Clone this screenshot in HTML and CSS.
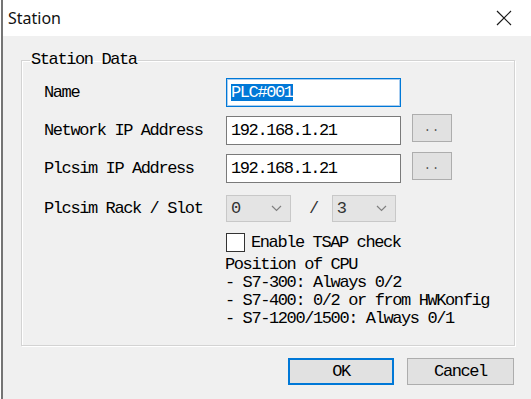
FILE: index.html
```html
<!DOCTYPE html>
<html>
<head>
<meta charset="utf-8">
<link rel="stylesheet" href="styles.css">
</head>
<body>
<div class="window">
  <div class="titlebar">
    <span class="title">Station</span>
    <svg class="close" width="16" height="16" viewBox="0 0 16 16"><path d="M1 1 L15 15 M15 1 L1 15" stroke="#1a1a1a" stroke-width="1.2" fill="none"/></svg>
  </div>
  <div class="content">
    <fieldset class="group">
      <legend>Station Data</legend>
      <div class="form">
        <div class="label">Name</div>
        <div class="field focused"><span class="sel">PLC#001</span></div>
        <div></div>

        <div class="label">Network IP Address</div>
        <div class="field">192.168.1.21</div>
        <div class="dots">..</div>

        <div class="label">Plcsim IP Address</div>
        <div class="field">192.168.1.21</div>
        <div class="dots">..</div>

        <div class="label rackrow">Plcsim Rack / Slot</div>
        <div class="rackslot rackrow">
          <div class="select"><span>0</span><svg width="11" height="7" viewBox="0 0 11 7"><path d="M1 1 L5.5 5.5 L10 1" stroke="#808080" stroke-width="1.2" fill="none"/></svg></div>
          <span class="slash">/</span>
          <div class="select"><span>3</span><svg width="11" height="7" viewBox="0 0 11 7"><path d="M1 1 L5.5 5.5 L10 1" stroke="#808080" stroke-width="1.2" fill="none"/></svg></div>
        </div>

        <div class="checkrow">
          <span class="checkbox"></span><span>Enable TSAP check</span>
        </div>

        <div class="info">Position of CPU<br>- S7-300: Always 0/2<br>- S7-400: 0/2 or from HWKonfig<br>- S7-1200/1500: Always 0/1</div>
      </div>
    </fieldset>
    <div class="buttons">
      <div class="btn default">OK</div>
      <div class="btn">Cancel</div>
    </div>
  </div>
</div>
</body>
</html>
```

FILE: styles.css
```css
html, body {
  margin: 0;
  padding: 0;
  background: #ffffff;
}

.window {
  margin-left: 1px;
  border-left: 2px solid #747474;
  height: 399px;
  box-sizing: border-box;
  background: #f0f0f0;
  font-family: "Liberation Mono", monospace;
  font-size: 17px;
  letter-spacing: -1.4px;
  color: #000;
  overflow: hidden;
}

.titlebar {
  height: 36px;
  background: #ffffff;
  display: flex;
  align-items: center;
  justify-content: space-between;
  padding: 0 19px 0 5px;
  font-family: "Noto Sans", sans-serif;
  letter-spacing: 0;
  font-size: 16px;
  color: #111;
}

.close {
  display: block;
}

.content {
  padding: 16px 16px 0 18px;
}

.group {
  margin: 0;
  padding: 10px 20px 17px 22px;
  border: 1px solid #d3d3d3;
  box-shadow: inset 1px 1px 0 #ffffff, 1px 1px 0 #ffffff;
  min-width: 0;
}

.group legend {
  margin-left: -14px;
  padding: 0 1px;
  line-height: 16px;
}

.form {
  display: grid;
  grid-template-columns: 171px 175px 40px;
  column-gap: 11px;
  row-gap: 9px;
}

.label {
  align-self: center;
  white-space: nowrap;
}

.field {
  height: 29px;
  box-sizing: border-box;
  border: 1px solid #7a7a7a;
  background: #fff;
  display: flex;
  align-items: center;
  padding-left: 4px;
  white-space: nowrap;
}

.field.focused {
  border-color: #0078d7;
  box-shadow: inset 0 0 0 1px #a8cdf0;
}

.sel {
  background: #0078d7;
  color: #fff;
  line-height: 17px;
}

.dots {
  align-self: start;
  margin-top: -2px;
  height: 28px;
  box-sizing: border-box;
  border: 1px solid #adadad;
  background: #e1e1e1;
  color: #555;
  font-size: 12px;
  letter-spacing: 1px;
  display: flex;
  align-items: center;
  justify-content: center;
}

.rackrow {
  margin-top: 3px;
}

.rackslot {
  grid-column: 2 / 4;
  display: flex;
  align-items: center;
}

.select {
  width: 65px;
  height: 27px;
  box-sizing: border-box;
  border: 1px solid #c8c8c8;
  background: #e4e4e4;
  display: flex;
  align-items: center;
  justify-content: space-between;
  padding: 0 8px 0 4px;
  color: #333;
}

.select + .slash + .select {
  width: 64px;
}

.slash {
  margin: 0 14px 0 18px;
  color: #333;
}

.checkrow {
  grid-column: 2 / 4;
  margin-top: 2px;
  display: flex;
  align-items: center;
  gap: 6px;
}

.checkbox {
  width: 19px;
  height: 19px;
  box-sizing: border-box;
  border: 1px solid #333;
  background: #fff;
}

.info {
  grid-column: 2 / 4;
  margin-top: -5px;
  margin-left: -1px;
  line-height: 18px;
  white-space: nowrap;
}

.buttons {
  display: flex;
  justify-content: flex-end;
  gap: 13px;
  margin-top: 12px;
  padding-right: 1px;
}

.btn {
  width: 107px;
  height: 27px;
  box-sizing: border-box;
  border: 1px solid #adadad;
  background: #e1e1e1;
  display: flex;
  align-items: center;
  justify-content: center;
}

.btn.default {
  width: 106px;
  border-color: #0078d7;
  box-shadow: inset 0 0 0 1px #0078d7;
}
```
